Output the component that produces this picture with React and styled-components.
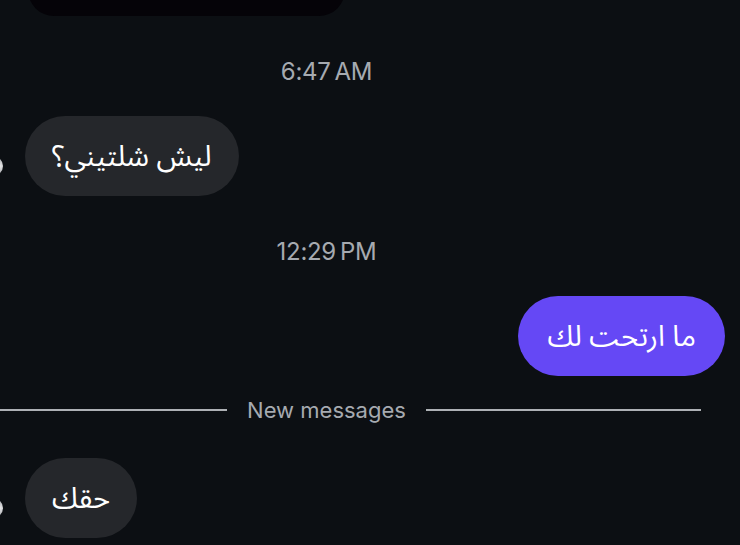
import React from "react";
import styled, { createGlobalStyle } from "styled-components";

const Global = createGlobalStyle`
  html, body { margin: 0; padding: 0; background: #0c0f13; }
  body { font-family: Inter, "Noto Sans", "DejaVu Sans", sans-serif; }
`;

const Page = styled.div`
  width: 740px;
  height: 545px;
  overflow: hidden;
  background: #0c0f13;
`;

const Thread = styled.div`
  width: 773px;
  margin-left: -48px;
  display: flex;
  flex-direction: column;
`;

const MediaBubble = styled.div`
  width: 317px;
  height: 60px;
  margin-top: -44px;
  margin-left: 76px;
  background: #050308;
  border-radius: 26px;
`;

const Timestamp = styled.div`
  margin: ${(p) => p.$top}px 24px ${(p) => p.$bottom}px 0;
  text-align: center;
  font-family: Inter, "Liberation Sans", sans-serif;
  font-size: 24px;
  line-height: 24px;
  color: #a6aab0;
  letter-spacing: -0.3px;
`;

const Row = styled.div`
  display: flex;
  align-items: flex-end;
  justify-content: ${(p) => (p.$out ? "flex-end" : "flex-start")};
  padding-left: ${(p) => (p.$out ? 0 : 31)}px;
  gap: 22px;
`;

const Avatar = styled.div`
  width: 20px;
  height: 20px;
  margin-bottom: 20px;
  border-radius: 50%;
  background: radial-gradient(circle at 85% 50%, #e8e8ea 0%, #9a9ca0 50%, #3a3c40 100%);
  flex: none;
`;

const Bubble = styled.div`
  height: 80px;
  box-sizing: border-box;
  padding: 0 ${(p) => (p.$out ? 29 : 27)}px;
  display: flex;
  align-items: center;
  border-radius: 40px;
  background: ${(p) => (p.$out ? "#6548f5" : "#25272b")};
  color: #ffffff;
  font-family: "Noto Sans Arabic", "DejaVu Sans", "Noto Sans", sans-serif;
  font-size: 29px;
  direction: rtl;
  white-space: nowrap;
`;

const Divider = styled.div`
  display: flex;
  align-items: center;
  gap: 20px;
  margin: 14px 24px 28px 0;
  height: 40px;
`;

const Line = styled.div`
  flex: 1;
  height: 2px;
  background: #aeb1b5;
`;

const DividerLabel = styled.span`
  font-family: Inter, "Liberation Sans", sans-serif;
  font-size: 22px;
  color: #a6aab0;
  white-space: nowrap;
`;

export default function App() {
  return (
    <>
      <Global />
      <Page>
        <Thread>
          <MediaBubble />
          <Timestamp $top={44} $bottom={32}>6:47&#8239;AM</Timestamp>
          <Row>
            <Avatar />
            <Bubble>ليش شلتيني؟</Bubble>
          </Row>
          <Timestamp $top={44} $bottom={32}>12:29&#8239;PM</Timestamp>
          <Row $out>
            <Bubble $out>ما ارتحت لك</Bubble>
          </Row>
          <Divider>
            <Line />
            <DividerLabel>New messages</DividerLabel>
            <Line />
          </Divider>
          <Row>
            <Avatar />
            <Bubble>حقك</Bubble>
          </Row>
        </Thread>
      </Page>
    </>
  );
}
